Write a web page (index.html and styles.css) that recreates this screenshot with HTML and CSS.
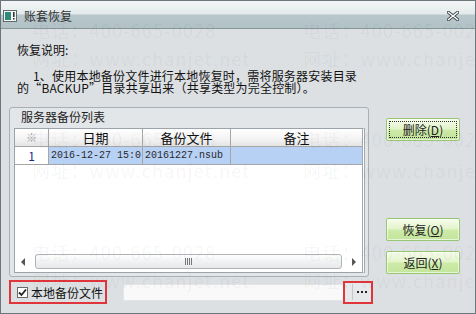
FILE: index.html
```html
<!DOCTYPE html>
<html lang="zh-CN">
<head>
    <meta charset="UTF-8">
    <title>账套恢复</title>
    <link rel="stylesheet" href="styles.css">
</head>
<body>
    <div class="window">
        <div class="titlebar">
            <span class="app-icon">
                <svg width="14" height="12" viewBox="0 0 14 12">
                    <rect x="0.5" y="0.5" width="13" height="11" fill="#f4f6f6" stroke="#5f6a6e"/>
                    <rect x="2" y="2" width="6" height="8" fill="#2f8a78"/>
                    <rect x="10" y="2" width="1.6" height="5" fill="#333"/>
                    <rect x="10" y="8" width="1.6" height="1.6" fill="#333"/>
                </svg>
            </span>
            <span class="title">账套恢复</span>
            <span class="close-btn">
                <svg width="12" height="10" viewBox="0 0 12 10">
                    <path d="M1.5 1.5 L10.5 8.5 M10.5 1.5 L1.5 8.5" stroke="#3c4448" stroke-width="3.2" stroke-linecap="square"/>
                    <path d="M1.5 1.5 L10.5 8.5 M10.5 1.5 L1.5 8.5" stroke="#ffffff" stroke-width="1.4" stroke-linecap="square"/>
                </svg>
            </span>
        </div>

        <div class="content">
            <div class="desc">
                <p class="desc-title">恢复说明:</p>
                <p class="desc-text"><span class="indent"></span>1、使用本地备份文件进行本地恢复时，需将服务器安装目录<br>的“BACKUP”目录共享出来（共享类型为完全控制）。</p>
            </div>

            <div class="main">
                <div class="groupbox">
                    <div class="group-title">服务器备份列表</div>
                    <div class="listbox">
                        <div class="grid">
                            <div class="row head">
                                <div class="cell c-no star">※</div>
                                <div class="cell c-date">日期</div>
                                <div class="cell c-file">备份文件</div>
                                <div class="cell c-note">备注</div>
                            </div>
                            <div class="row data selected">
                                <div class="cell c-no num">1</div>
                                <div class="cell c-date mono">2016-12-27 15:0</div>
                                <div class="cell c-file mono">20161227.nsub</div>
                                <div class="cell c-note"></div>
                            </div>
                        </div>
                        <div class="hscroll">
                            <span class="arrow left"></span>
                            <div class="thumb"><span class="grip"></span></div>
                            <span class="arrow right"></span>
                        </div>
                    </div>
                </div>

                <div class="buttons">
                    <button class="btn focused"><span class="focus-ring">删除(<u>D</u>)</span></button>
                    <div class="spacer"></div>
                    <button class="btn"><span class="focus-ring">恢复(<u>O</u>)</span></button>
                    <button class="btn"><span class="focus-ring">返回(<u>X</u>)</span></button>
                </div>
            </div>

            <div class="bottom">
                <label class="local-check mark">
                    <span class="checkbox">
                        <svg width="9" height="9" viewBox="0 0 9 9">
                            <path d="M1 4.5 L3.5 7 L8 1.5" fill="none" stroke="#222" stroke-width="1.8"/>
                        </svg>
                    </span>
                    本地备份文件
                </label>
                <div class="path-input"></div>
                <div class="browse mark">
                    <span class="dots"><i></i><i></i><i></i></span>
                </div>
            </div>
        </div>

        <div class="watermark">
            <span>电话：400-665-0028</span><span>电话：400-665-0028</span>
            <span>网址：www.chanjet.net</span><span>网址：www.chanjet.net</span>
            <span>电话：400-665-0028</span><span>电话：400-665-0028</span>
            <span>网址：www.chanjet.net</span><span>网址：www.chanjet.net</span>
            <span>电话：400-665-0028</span><span>电话：400-665-0028</span>
            <span>网址：www.chanjet.net</span><span>网址：www.chanjet.net</span>
        </div>
    </div>
</body>
</html>
```

FILE: styles.css
```css
* {
    margin: 0;
    padding: 0;
    box-sizing: border-box;
    font-family: "Noto Sans CJK SC", "DejaVu Sans", sans-serif;
}

body {
    background-color: #dde0e3;
    width: 476px;
    height: 314px;
    overflow: hidden;
}

.window {
    position: relative;
    width: 476px;
    height: 314px;
    border: 1px solid #6b767b;
    display: flex;
    flex-direction: column;
    background-color: #dde0e3;
    overflow: hidden;
}

.titlebar {
    height: 28px;
    display: flex;
    align-items: center;
    padding-left: 2px;
    padding-right: 16px;
    padding-top: 3px;
    background: linear-gradient(to bottom, #f3f6f6 0, #e3eaeb 13px, #b8c7cb 14px, #b2c2c6 26px);
    border-bottom: 1px solid #87969b;
}

.app-icon {
    display: flex;
    width: 14px;
    height: 12px;
}

.title {
    margin-left: 7px;
    font-size: 12px;
    line-height: 14px;
    color: #333;
}

.close-btn {
    margin-left: auto;
    display: flex;
}

.content {
    flex: 1;
    display: flex;
    flex-direction: column;
    padding: 14px 0 0 8px;
}

.desc {
    padding-left: 8px;
    color: #111;
}

.desc-title {
    font-size: 12px;
    line-height: 14px;
}

.desc-text {
    margin-top: 13px;
    font-size: 12px;
    line-height: 12px;
    letter-spacing: 0.2px;
}

.indent {
    display: inline-block;
    width: 16px;
}

.main {
    margin-top: 13px;
    display: flex;
    align-items: flex-start;
}

.groupbox {
    width: 360px;
    height: 170px;
    border: 1px solid #a9b0b5;
    border-radius: 3px;
    background-color: #e3e6e9;
    padding: 0 3px 3px 4px;
    display: flex;
    flex-direction: column;
}

.group-title {
    height: 20px;
    padding-left: 7px;
    font-size: 12px;
    line-height: 18px;
    color: #222;
}

.listbox {
    flex: 1;
    background-color: #fff;
    border: 1px solid #9da4a9;
    border-right: 3px double #a3a8ac;
    display: flex;
    flex-direction: column;
}

.grid {
    flex: 1;
}

.row {
    display: flex;
    height: 18px;
}

.cell {
    border-right: 1px solid #a6a6a6;
    font-size: 12px;
    line-height: 17px;
    white-space: nowrap;
    overflow: hidden;
}

.c-no { width: 34px; text-align: center; }
.c-date { width: 94px; }
.c-file { width: 88px; }
.c-note { flex: 1; border-right: none; }

.head {
    background: linear-gradient(to bottom, #ffffff, #f3f3f3 60%, #e4e4e4);
    border-bottom: 1px solid #a6a6a6;
}

.head .cell {
    text-align: center;
    color: #111;
    font-size: 13px;
}

.head .star {
    color: #a0a0a0;
    font-size: 11px;
}

.data {
    border-bottom: 1px solid #a6a6a6;
}

.selected .cell {
    background-color: #b7d1f5;
}

.selected .num {
    background-color: #fff;
    color: #1a2a8c;
}

.mono {
    font-family: "Liberation Mono", "Noto Sans CJK SC", monospace;
    font-size: 10px;
    color: #2a2a2a;
    padding-left: 2px;
}

.hscroll {
    height: 19px;
    display: flex;
    align-items: center;
    padding: 0 6px 0 6px;
    margin-bottom: 1px;
}

.arrow {
    width: 0;
    height: 0;
    border-top: 4px solid transparent;
    border-bottom: 4px solid transparent;
}

.arrow.left {
    border-right: 4px solid #555;
}

.arrow.right {
    border-left: 4px solid #555;
}

.thumb {
    flex: 1;
    height: 15px;
    margin: 0 10px 0 10px;
    border: 1px solid #b0b4b8;
    border-radius: 3px;
    background: linear-gradient(to bottom, #ffffff, #f1f2f3 50%, #e6e8ea);
    display: flex;
    justify-content: center;
    align-items: center;
}

.grip {
    width: 7px;
    height: 7px;
    background: repeating-linear-gradient(to right, #777 0, #777 1px, transparent 1px, transparent 2px);
}

.buttons {
    margin-left: 17px;
    padding-top: 11px;
    height: 167px;
    display: flex;
    flex-direction: column;
    gap: 10px;
}

.spacer {
    flex: 1;
}

.btn {
    width: 74px;
    height: 23px;
    border: 1px solid #97c771;
    border-radius: 2px;
    background: linear-gradient(to bottom, #f6fcec, #e4f4cc 45%, #cdeaa8 55%, #c4e59c);
    box-shadow: inset 0 0 0 1px rgba(255, 255, 255, 0.6);
    font-size: 12px;
    color: #222;
    padding: 2px;
    display: flex;
}

.focus-ring {
    flex: 1;
    display: flex;
    align-items: center;
    justify-content: center;
    border: 1px dotted transparent;
    line-height: 14px;
}

.focused .focus-ring {
    border-color: #333;
}

.btn u {
    text-decoration: underline;
}

.bottom {
    margin-top: 3px;
    display: flex;
    align-items: center;
    height: 24px;
}

.mark {
    border: 2px solid #e0353a;
}

.local-check {
    width: 98px;
    height: 24px;
    display: flex;
    align-items: center;
    padding-left: 6px;
    font-size: 12px;
    color: #111;
    gap: 3px;
}

.checkbox {
    width: 11px;
    height: 11px;
    border: 1px solid #6a6a6a;
    background-color: #fff;
    display: flex;
    align-items: center;
    justify-content: center;
}

.path-input {
    width: 221px;
    height: 17px;
    margin-left: 16px;
    background-color: #f9f9f9;
    border: 1px solid #e2e4e6;
}

.browse {
    width: 30px;
    height: 23px;
    margin-left: -1px;
    display: flex;
    align-items: center;
    padding-left: 7px;
    background-color: #e6e8ea;
}

.dots {
    display: flex;
    align-items: center;
    gap: 2px;
    height: 16px;
    padding-left: 4px;
    border-left: 1px solid #c4c8cc;
}

.dots i {
    width: 2px;
    height: 2px;
    background-color: #222;
}

.watermark {
    position: absolute;
    top: 19px;
    left: 31px;
    display: grid;
    grid-template-columns: 271px 271px;
    grid-template-rows: 28px 81px 31px 82px 28px 20px;
    pointer-events: none;
}

.watermark span {
    font-size: 18px;
    line-height: 20px;
    letter-spacing: 1.2px;
    color: rgba(0, 0, 0, 0.05);
    white-space: nowrap;
}
```
